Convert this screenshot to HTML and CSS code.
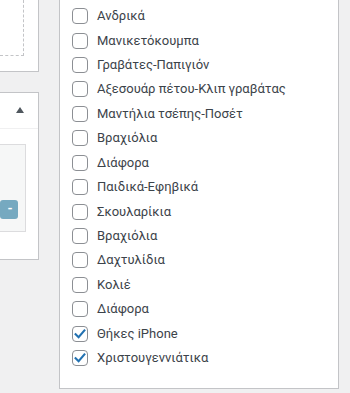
FILE: index.html
```html
<!DOCTYPE html>
<html>
<head>
<meta charset="utf-8">
<link rel="stylesheet" href="styles.css">
</head>
<body>
<div class="page">
  <div class="side">
    <div class="box box-top">
      <div class="dashed"></div>
    </div>
    <div class="box box-second">
      <div class="box-head"><span class="toggle"></span></div>
      <div class="box-body">
        <div class="inner">
          <span class="minus">-</span>
        </div>
      </div>
    </div>
  </div>
  <div class="panel">
    <ul class="checklist">
      <li><span class="cb"></span><span class="label">Ανδρικά</span></li>
      <li><span class="cb"></span><span class="label">Μανικετόκουμπα</span></li>
      <li><span class="cb"></span><span class="label">Γραβάτες-Παπιγιόν</span></li>
      <li><span class="cb"></span><span class="label">Αξεσουάρ πέτου-Κλιπ γραβάτας</span></li>
      <li><span class="cb"></span><span class="label">Μαντήλια τσέπης-Ποσέτ</span></li>
      <li><span class="cb"></span><span class="label">Βραχιόλια</span></li>
      <li><span class="cb"></span><span class="label">Διάφορα</span></li>
      <li><span class="cb"></span><span class="label">Παιδικά-Εφηβικά</span></li>
      <li><span class="cb"></span><span class="label">Σκουλαρίκια</span></li>
      <li><span class="cb"></span><span class="label">Βραχιόλια</span></li>
      <li><span class="cb"></span><span class="label">Δαχτυλίδια</span></li>
      <li><span class="cb"></span><span class="label">Κολιέ</span></li>
      <li><span class="cb"></span><span class="label">Διάφορα</span></li>
      <li><span class="cb checked"><svg viewBox="0 0 16 16" width="16" height="16"><path d="M3.6 8.2 L6.6 11.2 L12.4 4.4" fill="none" stroke="#2271b1" stroke-width="2.1" stroke-linecap="square"/></svg></span><span class="label">Θήκες iPhone</span></li>
      <li><span class="cb checked"><svg viewBox="0 0 16 16" width="16" height="16"><path d="M3.6 8.2 L6.6 11.2 L12.4 4.4" fill="none" stroke="#2271b1" stroke-width="2.1" stroke-linecap="square"/></svg></span><span class="label">Χριστουγεννιάτικα</span></li>
    </ul>
  </div>
</div>
</body>
</html>
```

FILE: styles.css
```css
html, body {
  margin: 0;
  padding: 0;
}
body {
  background: #f0f0f1;
  font-family: Roboto, "Noto Sans", sans-serif;
  font-size: 13px;
  color: #3c434a;
  width: 350px;
  height: 393px;
  overflow: hidden;
}
.page {
  display: flex;
  align-items: flex-start;
  gap: 20px;
}
.side {
  width: 39px;
  display: flex;
  flex-direction: column;
  gap: 20px;
}
.box {
  background: #fff;
  border-right: 1px solid #c3c4c7;
  border-bottom: 1px solid #c3c4c7;
  box-sizing: border-box;
}
.box-top {
  height: 72px;
  padding-bottom: 15px;
}
.dashed {
  width: 24px;
  height: 56px;
  border-right: 1px dashed #c3c4c7;
  border-bottom: 1px dashed #c3c4c7;
  box-sizing: border-box;
}
.box-second {
  border-top: 1px solid #c3c4c7;
  height: 168px;
}
.box-head {
  height: 35px;
  position: relative;
  border-bottom: 1px solid #f0f0f1;
}
.toggle {
  position: absolute;
  left: 16px;
  top: 14px;
  width: 0;
  height: 0;
  border-left: 4.5px solid transparent;
  border-right: 4.5px solid transparent;
  border-bottom: 6px solid #50575e;
}
.box-body {
  padding-top: 15px;
}
.inner {
  width: 26px;
  height: 88px;
  background: #f6f7f7;
  border-top: 1px solid #dcdcde;
  border-right: 1px solid #dcdcde;
  border-bottom: 1px solid #dcdcde;
  box-sizing: border-box;
  position: relative;
}
.minus {
  position: absolute;
  left: 0;
  top: 55px;
  width: 18px;
  height: 19px;
  background: #76a9c0;
  border-radius: 3px;
  color: #fff;
  font-weight: bold;
  font-size: 13px;
  line-height: 18px;
  text-align: center;
  text-indent: 2px;
}
.panel {
  width: 280px;
  height: 389px;
  background: #fff;
  border-left: 1px solid #c3c4c7;
  border-right: 1px solid #c3c4c7;
  border-bottom: 1px solid #c3c4c7;
  box-sizing: border-box;
}
.checklist {
  list-style: none;
  margin: 0;
  padding: 4px 0 0 12px;
}
.checklist li {
  display: flex;
  align-items: center;
  height: 24.43px;
  white-space: nowrap;
}
.cb {
  width: 16px;
  height: 16px;
  border: 1px solid #8c8f94;
  border-radius: 4px;
  box-sizing: border-box;
  margin-right: 9px;
  flex: none;
  position: relative;
  background: #fff;
}
.cb svg {
  position: absolute;
  left: -1px;
  top: -1px;
}
.label {
  line-height: 18px;
}
```
